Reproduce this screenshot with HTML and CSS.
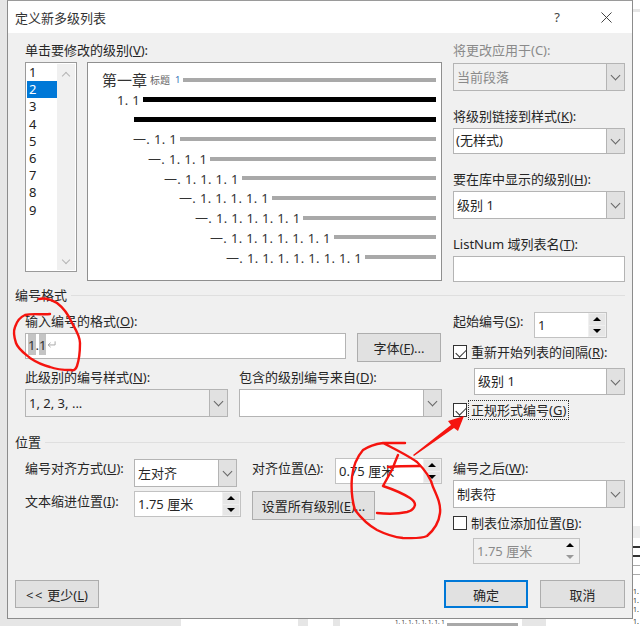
FILE: index.html
```html
<!DOCTYPE html>
<html lang="zh-CN">
<head>
<meta charset="utf-8">
<title>定义新多级列表</title>
<link rel="stylesheet" href="styles.css">
</head>
<body>
<div class="backdrop">
  <div class="bd bd-left"></div>
  <div class="bd bd-bot1"></div>
  <div class="bd bd-bot2"></div>
  <div class="bd bd-bot3"></div>
  <div class="bd bd-bot4"></div>
  <div class="bd bd-barbot"></div>
  <div class="bd bd-right1"></div>
  <div class="bd bd-right2"></div>
  <div class="bd bd-line1"></div>
  <div class="bd bd-line2"></div>
  <div class="bd bd-line3"></div>
  <div class="bd bd-line4"></div>
  <span class="bd bd-numbot">1. 1. 1. 1. 1. 1. 1. 1</span>
  <span class="bd bd-n1">1.</span>
  <span class="bd bd-n2">1.</span>
  <span class="bd bd-n3">1.</span>
  <span class="bd bd-n4">1.</span>
</div>

<div class="dialog">
  <header class="titlebar">
    <span class="title">定义新多级列表</span>
    <span class="help">?</span>
    <svg class="close" viewBox="0 0 12 12"><path d="M.5.5l11 11M11.5.5l-11 11"/></svg>
  </header>

  <main class="content">
    <section class="top">
      <div class="col-left">
        <div class="lbl">单击要修改的级别(<u>V</u>):</div>
        <div class="top-row">
          <div class="levels">
            <ul class="level-list">
              <li>1</li><li class="sel-item">2</li><li>3</li><li>4</li><li>5</li><li>6</li><li>7</li><li>8</li><li>9</li>
            </ul>
            <div class="vscroll"><i class="chev up"></i><i class="chev"></i></div>
          </div>
          <div class="preview">
            <div class="pv p1"><span class="big">第一章</span><span class="small">标题</span><span class="blue">1</span><i class="bar"></i></div>
            <div class="pv p2"><span>1. 1</span><i class="bar black"></i></div>
            <div class="pv p3"><i class="bar black"></i></div>
            <div class="pv p4"><span>一. 1. 1</span><i class="bar"></i></div>
            <div class="pv p5"><span>一. 1. 1. 1</span><i class="bar"></i></div>
            <div class="pv p6"><span>一. 1. 1. 1. 1</span><i class="bar"></i></div>
            <div class="pv p7"><span>一. 1. 1. 1. 1. 1</span><i class="bar"></i></div>
            <div class="pv p8"><span>一. 1. 1. 1. 1. 1. 1</span><i class="bar"></i></div>
            <div class="pv p9"><span>一. 1. 1. 1. 1. 1. 1. 1</span><i class="bar"></i></div>
            <div class="pv p10"><span>一. 1. 1. 1. 1. 1. 1. 1. 1</span><i class="bar"></i></div>
          </div>
        </div>
      </div>
      <div class="col-right">
        <div class="lbl dim">将更改应用于(C):</div>
        <div class="select h28 mt4 disabled"><span class="val">当前段落</span><span class="arr"></span></div>
        <div class="lbl mt16">将级别链接到样式(<u>K</u>):</div>
        <div class="select h26 mt3"><span class="val tight">(无样式)</span><span class="arr"></span></div>
        <div class="lbl mt16">要在库中显示的级别(<u>H</u>):</div>
        <div class="select h28 mt3"><span class="val">级别 1</span><span class="arr"></span></div>
        <div class="lbl mt16">ListNum 域列表名(<u>T</u>):</div>
        <div class="input h26 mt3"></div>
      </div>
    </section>

    <h2 class="group g1">编号格式</h2>
    <section class="split s2">
      <div class="col-left">
        <div class="lbl">输入编号的格式(<u>O</u>):</div>
        <div class="fmt-row">
          <div class="input fmt"><span class="hl">1</span>.<span class="hl">1</span><svg class="ret" viewBox="0 0 10 9"><path d="M9 1v4H1.5M4 2.5L1.2 5 4 7.5"/></svg></div>
          <button class="btn font-btn">字体(<u>F</u>)...</button>
        </div>
        <div class="two">
          <div>
            <div class="lbl">此级别的编号样式(<u>N</u>):</div>
            <div class="select h28 mt3 grayfield"><span class="val">1, 2, 3, ...</span><span class="arr"></span></div>
          </div>
          <div>
            <div class="lbl">包含的级别编号来自(<u>D</u>):</div>
            <div class="select h28 mt3"><span class="val"></span><span class="arr"></span></div>
          </div>
        </div>
      </div>
      <div class="col-right">
        <div class="start-row">
          <div class="lbl start-lbl">起始编号(<u>S</u>):</div>
          <div class="spin w73"><span class="val">1</span><span class="spins"><i class="tri up"></i><i class="tri down"></i></span></div>
        </div>
        <label class="check mt7"><span class="box checked"></span><span>重新开始列表的间隔(<u>R</u>):</span></label>
        <div class="select restart"><span class="val">级别 1</span><span class="arr"></span></div>
        <label class="check mt8"><span class="box checked"></span><span class="focus">正规形式编号(<u>G</u>)</span></label>
      </div>
    </section>

    <h2 class="group g2">位置</h2>
    <section class="split s3">
      <div class="pos-grid">
        <div class="lbl mt1">编号对齐方式(<u>U</u>):</div>
        <div class="select h28 mt1 w103"><span class="val">左对齐</span><span class="arr"></span></div>
        <div class="lbl mt1">对齐位置(<u>A</u>):</div>
        <div class="spin w107"><span class="val">0.75 厘米</span><span class="spins"><i class="tri up"></i><i class="tri down"></i></span></div>
        <div class="lbl mt1">文本缩进位置(<u>I</u>):</div>
        <div class="spin w107"><span class="val">1.75 厘米</span><span class="spins"><i class="tri up"></i><i class="tri down"></i></span></div>
        <button class="btn all-btn">设置所有级别(<u>E</u>)...</button>
      </div>
      <div class="col-right">
        <div class="lbl mt1">编号之后(<u>W</u>):</div>
        <div class="select h28 mt3"><span class="val">制表符</span><span class="arr"></span></div>
        <label class="check mt8"><span class="box"></span><span>制表位添加位置(<u>B</u>):</span></label>
        <div class="spin w107 tabpos disabled"><span class="val">1.75 厘米</span><span class="spins"><i class="tri up"></i><i class="tri down off"></i></span></div>
      </div>
    </section>

    <footer class="footer">
      <button class="btn foot"><span class="lt">&lt;&lt;</span> 更少(<u>L</u>)</button>
      <div class="foot-right">
        <button class="btn foot primary">确定</button>
        <button class="btn foot cancel">取消</button>
      </div>
    </footer>
  </main>
</div>

<svg class="ink" viewBox="0 0 640 626">
  <path d="M39 299C46 297 52 300 57 303C65 309 69 316 72 323C76 330 80 336 80 343C80 352 79 360 77 366C76 369 74 371 71 370C62 370 55 369 50 367C42 365 36 362 30 358C24 353 18 349 16 343C14 337 13 332 15 327C17 321 20 317 25 315C33 313 42 315 50 314"/>
  <path d="M405 443H383C395 449 407 455 417 462C425 470 431 478 433 487C437 496 441 504 440 513C439 522 434 530 427 536C420 539 411 538 403 538C393 537 385 534 377 530C368 525 361 518 355 510C352 500 351 488 352 477C353 467 357 457 363 450C369 446 376 444 383 443"/>
  <path d="M398 455C396 460 394 464 393 468L383 486C392 489 402 493 410 498C413 500 415 503 415 505C414 509 411 511 407 512C398 514 387 514 377 513"/>
  <path d="M388 467C398 466 409 466 420 466"/>
  <polygon class="fill" points="413,455 451,425 448,421 464,416 458,431 454,428 414,456"/>
</svg>
</body>
</html>
```
FILE: styles.css
```css
* { box-sizing: border-box; }
html, body { margin: 0; padding: 0; }
body {
  position: relative;
  width: 640px;
  height: 626px;
  overflow: hidden;
  background: #fff;
  font-family: "Noto Sans", "Noto Sans CJK SC", sans-serif;
  font-size: 13px;
  color: #262626;
}
u { text-underline-offset: 1px; }

/* document behind the dialog */
.backdrop { position: absolute; inset: 0; }
.bd { position: absolute; }
.bd-left { left: 0; top: 0; width: 7px; height: 626px; background: #e6e6e6; }
.bd-bot1 { left: 0; top: 618px; width: 181px; height: 8px; background: #e6e6e6; }
.bd-bot2 { left: 298px; top: 618px; width: 10px; height: 8px; background: #e6e6e6; }
.bd-bot3 { left: 333px; top: 618px; width: 7px; height: 8px; background: #e6e6e6; }
.bd-bot4 { left: 522px; top: 618px; width: 24px; height: 8px; background: #e6e6e6; }
.bd-barbot { left: 447px; top: 623px; width: 71px; height: 3px; background: #a9a9a9; }
.bd-numbot { left: 395px; top: 619px; font-size: 6px; line-height: 7px; color: #333; }
.bd-right1 { left: 633px; top: 9px; width: 7px; height: 3px; background: #e6e6e6; }
.bd-right2 { left: 633px; top: 526px; width: 7px; height: 12px; background: #ededed; }
.bd-line1 { left: 633px; top: 546px; width: 7px; height: 2px; background: #333; }
.bd-line2 { left: 633px; top: 555px; width: 7px; height: 2px; background: #333; }
.bd-line3 { left: 633px; top: 565px; width: 7px; height: 1px; background: #aaa; }
.bd-line4 { left: 633px; top: 574px; width: 7px; height: 1px; background: #aaa; }
.bd-n1, .bd-n2, .bd-n3, .bd-n4 { left: 633px; font-size: 7px; line-height: 8px; color: #333; }
.bd-n1 { top: 588px; }
.bd-n2 { top: 597px; }
.bd-n3 { top: 606px; }
.bd-n4 { top: 618px; }

/* dialog */
.dialog {
  position: relative;
  margin-left: 7px;
  width: 626px;
  height: 619px;
  border: 1px solid #8c8c8c;
  border-top-color: #9a9a9a;
  background: #f0f0f0;
  display: flex;
  flex-direction: column;
}
.titlebar {
  height: 32px;
  flex: none;
  background: #fff;
  display: flex;
  align-items: center;
  padding: 0 20px 0 7px;
}
.title { flex: 1; color: #333; }
.help { width: 12px; margin-right: 38px; text-align: center; color: #444; font-size: 13px; }
.close { width: 11px; height: 11px; }
.close path { fill: none; stroke: #333; stroke-width: 1; }

.content { flex: 1; padding: 8px 7px 10px 7px; display: flex; flex-direction: column; }

.lbl { height: 18px; line-height: 18px; white-space: nowrap; }
.dim { color: #8a8a8a; }
.mt1 { margin-top: 1px; }
.mt3 { margin-top: 3px; }
.mt4 { margin-top: 4px; }
.mt7 { margin-top: 7px; }
.mt8 { margin-top: 8px; }
.mt16 { margin-top: 16px; }
.h26 { height: 26px; }
.h28 { height: 28px; }

.top { margin-left: 10px; display: flex; gap: 11px; height: 241px; }
.col-left { width: 417px; flex: none; }
.col-right { width: 172px; flex: none; display: flex; flex-direction: column; }
.top-row { margin-top: 3px; display: flex; gap: 10px; align-items: flex-start; }

.levels {
  width: 52px;
  height: 210px;
  background: #fff;
  border: 1px solid #9a9a9a;
  display: flex;
  padding: 1px;
}
.level-list { flex: 1; margin: 0; padding: 0; list-style: none; }
.level-list li { height: 17.2px; line-height: 17.2px; padding-left: 2px; color: #222; font-size: 13px; }
.level-list .sel-item { background: #0078d7; color: #fff; }
.vscroll {
  width: 18px;
  background: #f0f0f0;
  display: flex;
  flex-direction: column;
  justify-content: space-between;
  align-items: center;
  padding: 6px 0 7px;
}
.chev { width: 6px; height: 6px; border-right: 1px solid #b5b5b5; border-bottom: 1px solid #b5b5b5; transform: rotate(45deg); }
.chev.up { transform: rotate(225deg); margin-top: 3px; }

.preview {
  width: 355px;
  height: 219px;
  background: #fff;
  border: 1px solid #8f8f8f;
  padding: 7px 5px 0 0;
}
.pv { height: 19.7px; display: flex; align-items: center; letter-spacing: .35px; white-space: nowrap; color: #333; }
.bar { flex: 1; height: 4px; background: #a9a9a9; margin-left: 3px; }
.bar.black { height: 5px; background: #000; }
.big { font-size: 15px; letter-spacing: 0; }
.small { font-size: 10px; color: #666; margin-left: 3px; letter-spacing: 0; }
.blue { font-size: 9.5px; color: #3a74b8; margin-left: 5px; letter-spacing: 0; }
.p1 { padding-left: 14px; }
.p2 { padding-left: 29px; }
.p3 { padding-left: 46px; }
.p3 .bar { margin-left: 0; }
.p4 { padding-left: 45px; }
.p5 { padding-left: 60px; }
.p6 { padding-left: 76px; }
.p7 { padding-left: 91px; }
.p8 { padding-left: 107px; }
.p9 { padding-left: 122px; }
.p10 { padding-left: 138px; }

/* controls */
.select {
  display: flex;
  background: #fff;
  border: 1px solid #b4b4b4;
}
.select .val { flex: 1; padding-left: 3px; line-height: 26px; white-space: nowrap; overflow: hidden; }
.select.restart .val { line-height: 25px; }
.select .val.tight { padding-left: 2px; line-height: 22px; }
.arr {
  width: 18px;
  flex: none;
  background: #e1e1e1;
  border-left: 1px solid #b4b4b4;
  display: flex;
  align-items: center;
  justify-content: center;
}
.arr::after {
  content: "";
  width: 6px;
  height: 6px;
  margin-top: -3px;
  border-right: 1px solid #666;
  border-bottom: 1px solid #666;
  transform: rotate(45deg);
}
.select.disabled { background: #f0f0f0; color: #8a8a8a; }
.select.grayfield { background: #f0f0f0; }
.input { background: #fff; border: 1px solid #b4b4b4; }

.group {
  margin: 4px 0 0;
  height: 18px;
  line-height: 18px;
  font-size: 13px;
  font-weight: 400;
  display: flex;
  align-items: center;
  gap: 4px;
}
.group::after { content: ""; flex: 1; height: 1px; background: #dfdfdf; }
.g2 { margin-top: 13px; }

.split { margin-left: 10px; display: flex; gap: 11px; }
.s2 { margin-top: 8px; height: 108px; }
.s3 { margin-top: 7px; height: 106px; }

.fmt-row { margin-top: 3px; display: flex; gap: 11px; align-items: flex-start; }
.fmt { width: 321px; height: 26px; padding-left: 2px; line-height: 22px; color: #333; display: flex; align-items: flex-start; }
.hl { background: #c4c4c4; width: 7.5px; height: 21px; text-align: center; }
.ret { width: 9px; height: 9px; margin: 6px 0 0 1px; }
.ret path { fill: none; stroke: #a0a0a0; stroke-width: 1; }

.btn {
  font: inherit;
  color: #262626;
  background: #e1e1e1;
  border: 1px solid #adadad;
  padding: 0;
  white-space: nowrap;
}
.font-btn { width: 84px; height: 29px; }
.two { margin-top: 6px; display: grid; grid-template-columns: 203px 203px; gap: 11px; }

.start-row { display: flex; align-items: flex-start; }
.start-lbl { width: 81px; }
.spin {
  display: flex;
  height: 26px;
  background: #fff;
  border: 1px solid #c2c2c2;
}
.spin .val { flex: 1; padding-left: 3px; line-height: 24px; white-space: nowrap; overflow: hidden; }
.spins { width: 18px; flex: none; background: #f0f0f0; display: flex; flex-direction: column; gap: 1px; padding: 1px; }
.tri {
  flex: 1;
  background: #e6e6e6;
  position: relative;
  display: flex;
  align-items: center;
  justify-content: center;
}
.tri::after { content: ""; border-left: 4px solid transparent; border-right: 4px solid transparent; }
.tri.up::after { border-bottom: 4px solid #000; }
.tri.down::after { border-top: 4px solid #000; }
.tri.off::after { border-top-color: #999; }
.w73 { width: 73px; }
.w107 { width: 107px; }
.w103 { width: 103px; }

.check { display: flex; align-items: center; gap: 4px; height: 14px; line-height: 14px; white-space: nowrap; }
.box { width: 14px; height: 14px; flex: none; background: #fff; border: 1px solid #333; position: relative; }
.box.checked::after {
  content: "";
  position: absolute;
  left: 3.5px;
  top: 1px;
  width: 5px;
  height: 9px;
  border-right: 1.2px solid #333;
  border-bottom: 1.2px solid #333;
  transform: rotate(45deg);
}
.focus { outline: 1px dotted #333; outline-offset: 2px; }
.select.restart { margin: 9px 0 0 21px; height: 27px; }

.pos-grid {
  width: 417px;
  flex: none;
  display: grid;
  grid-template-columns: 109px 118px 83px 107px;
  grid-template-rows: 29px 29px;
  row-gap: 4px;
  align-items: start;
}
.all-btn { grid-column: 3 / span 2; width: 123px; height: 29px; }
.tabpos { margin: 8px 0 0 20px; }
.spin.disabled { background: #f0f0f0; color: #8a8a8a; }
.spin.disabled .tri { background: #f0f0f0; }

.footer { margin-top: 16px; margin-left: 0; display: flex; justify-content: space-between; flex: none; }
.foot { width: 84px; height: 28px; }
.lt { letter-spacing: 1.5px; }
.foot-right { display: flex; gap: 12px; }
.primary { border: 2px solid #0078d7; }
.cancel { width: 85px; }

/* red marker annotations drawn over the dialog */
.ink { position: absolute; left: 0; top: 0; width: 640px; height: 626px; pointer-events: none; }
.ink path { fill: none; stroke: #f5140f; stroke-width: 2.4; stroke-linecap: round; stroke-linejoin: round; }
.ink .fill { fill: #f5140f; }
```
